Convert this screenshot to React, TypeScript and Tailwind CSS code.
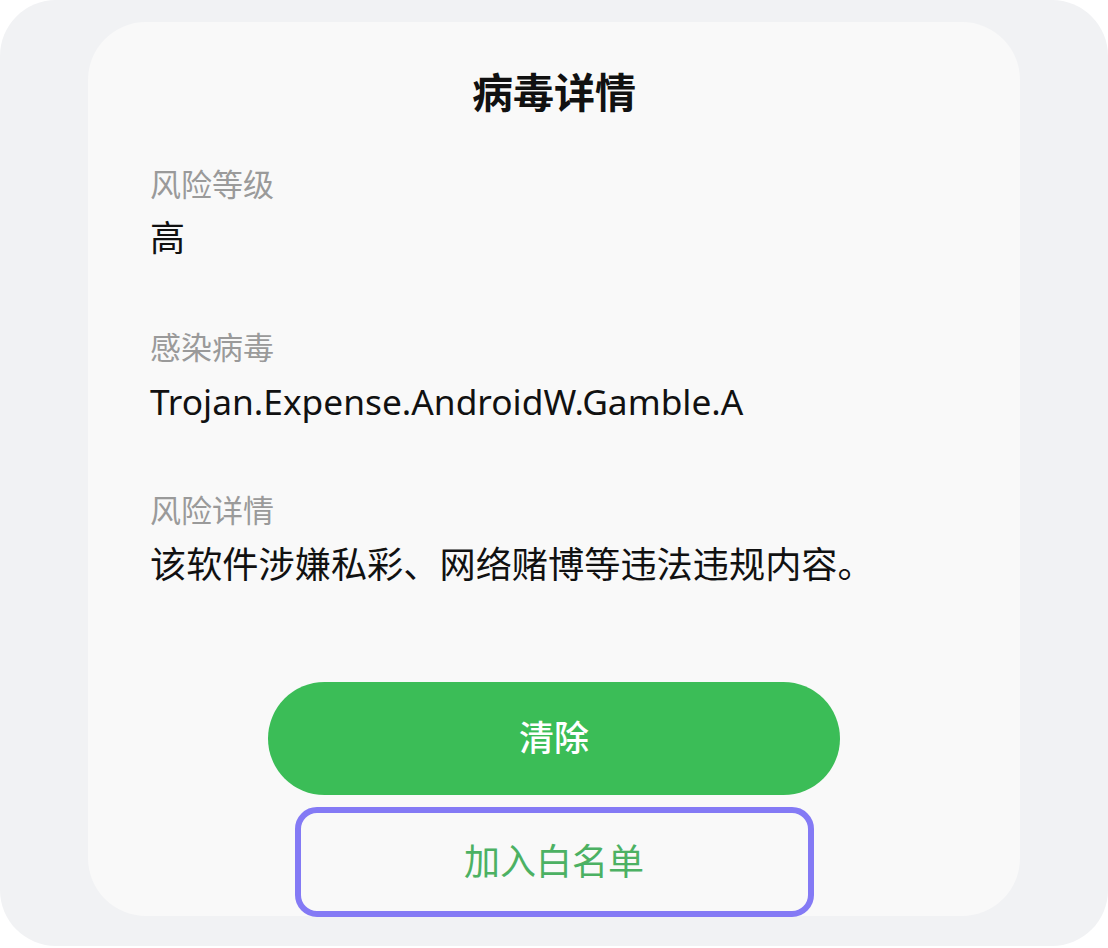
const font = { fontFamily: '"Noto Sans", "Noto Sans CJK SC", sans-serif' };

const Field = ({ label, value, className, valueClass }: { label: string; value: string; className?: string; valueClass?: string }) => {
  return (
    <div className={className}>
      <p className="text-[31px] leading-[40px] text-[#9a9a9a]">{label}</p>
      <p className={`mt-[12px] leading-[44px] text-[#111111] ${valueClass}`}>{value}</p>
    </div>
  );
};

const App = () => {
  return (
    <div className="bg-white w-[1108px] h-[948px]" style={font}>
      <div className="w-[1108px] h-[946px] rounded-[56px] bg-[#f1f2f4] px-[88px] pt-[22px] pb-[30px]">
        <div className="h-full rounded-[58px] bg-[#f9f9f9] flex flex-col px-[62px] pt-[46px]">
          <h1 className="text-center text-[41px] leading-[48px] font-semibold text-[#111111]">病毒详情</h1>
          <Field className="mt-[48px]" label="风险等级" value="高" valueClass="text-[35px]" />
          <Field className="mt-[67px]" label="感染病毒" value="Trojan.Expense.AndroidW.Gamble.A" valueClass="text-[35.3px]" />
          <Field className="mt-[67px]" label="风险详情" value="该软件涉嫌私彩、网络赌博等违法违规内容。" valueClass="text-[36.2px]" />
          <div className="mt-[96px] flex flex-col items-center">
            <button className="w-[572px] h-[113px] rounded-full bg-[#3bbd57] text-white text-[35px] font-medium">
              清除
            </button>
            <button className="mt-[12px] w-[519px] h-[110px] rounded-[22px] border-[6px] border-[#847af5] text-[#4cb163] text-[36px]">
              加入白名单
            </button>
          </div>
        </div>
      </div>
    </div>
  );
};

export default App;
